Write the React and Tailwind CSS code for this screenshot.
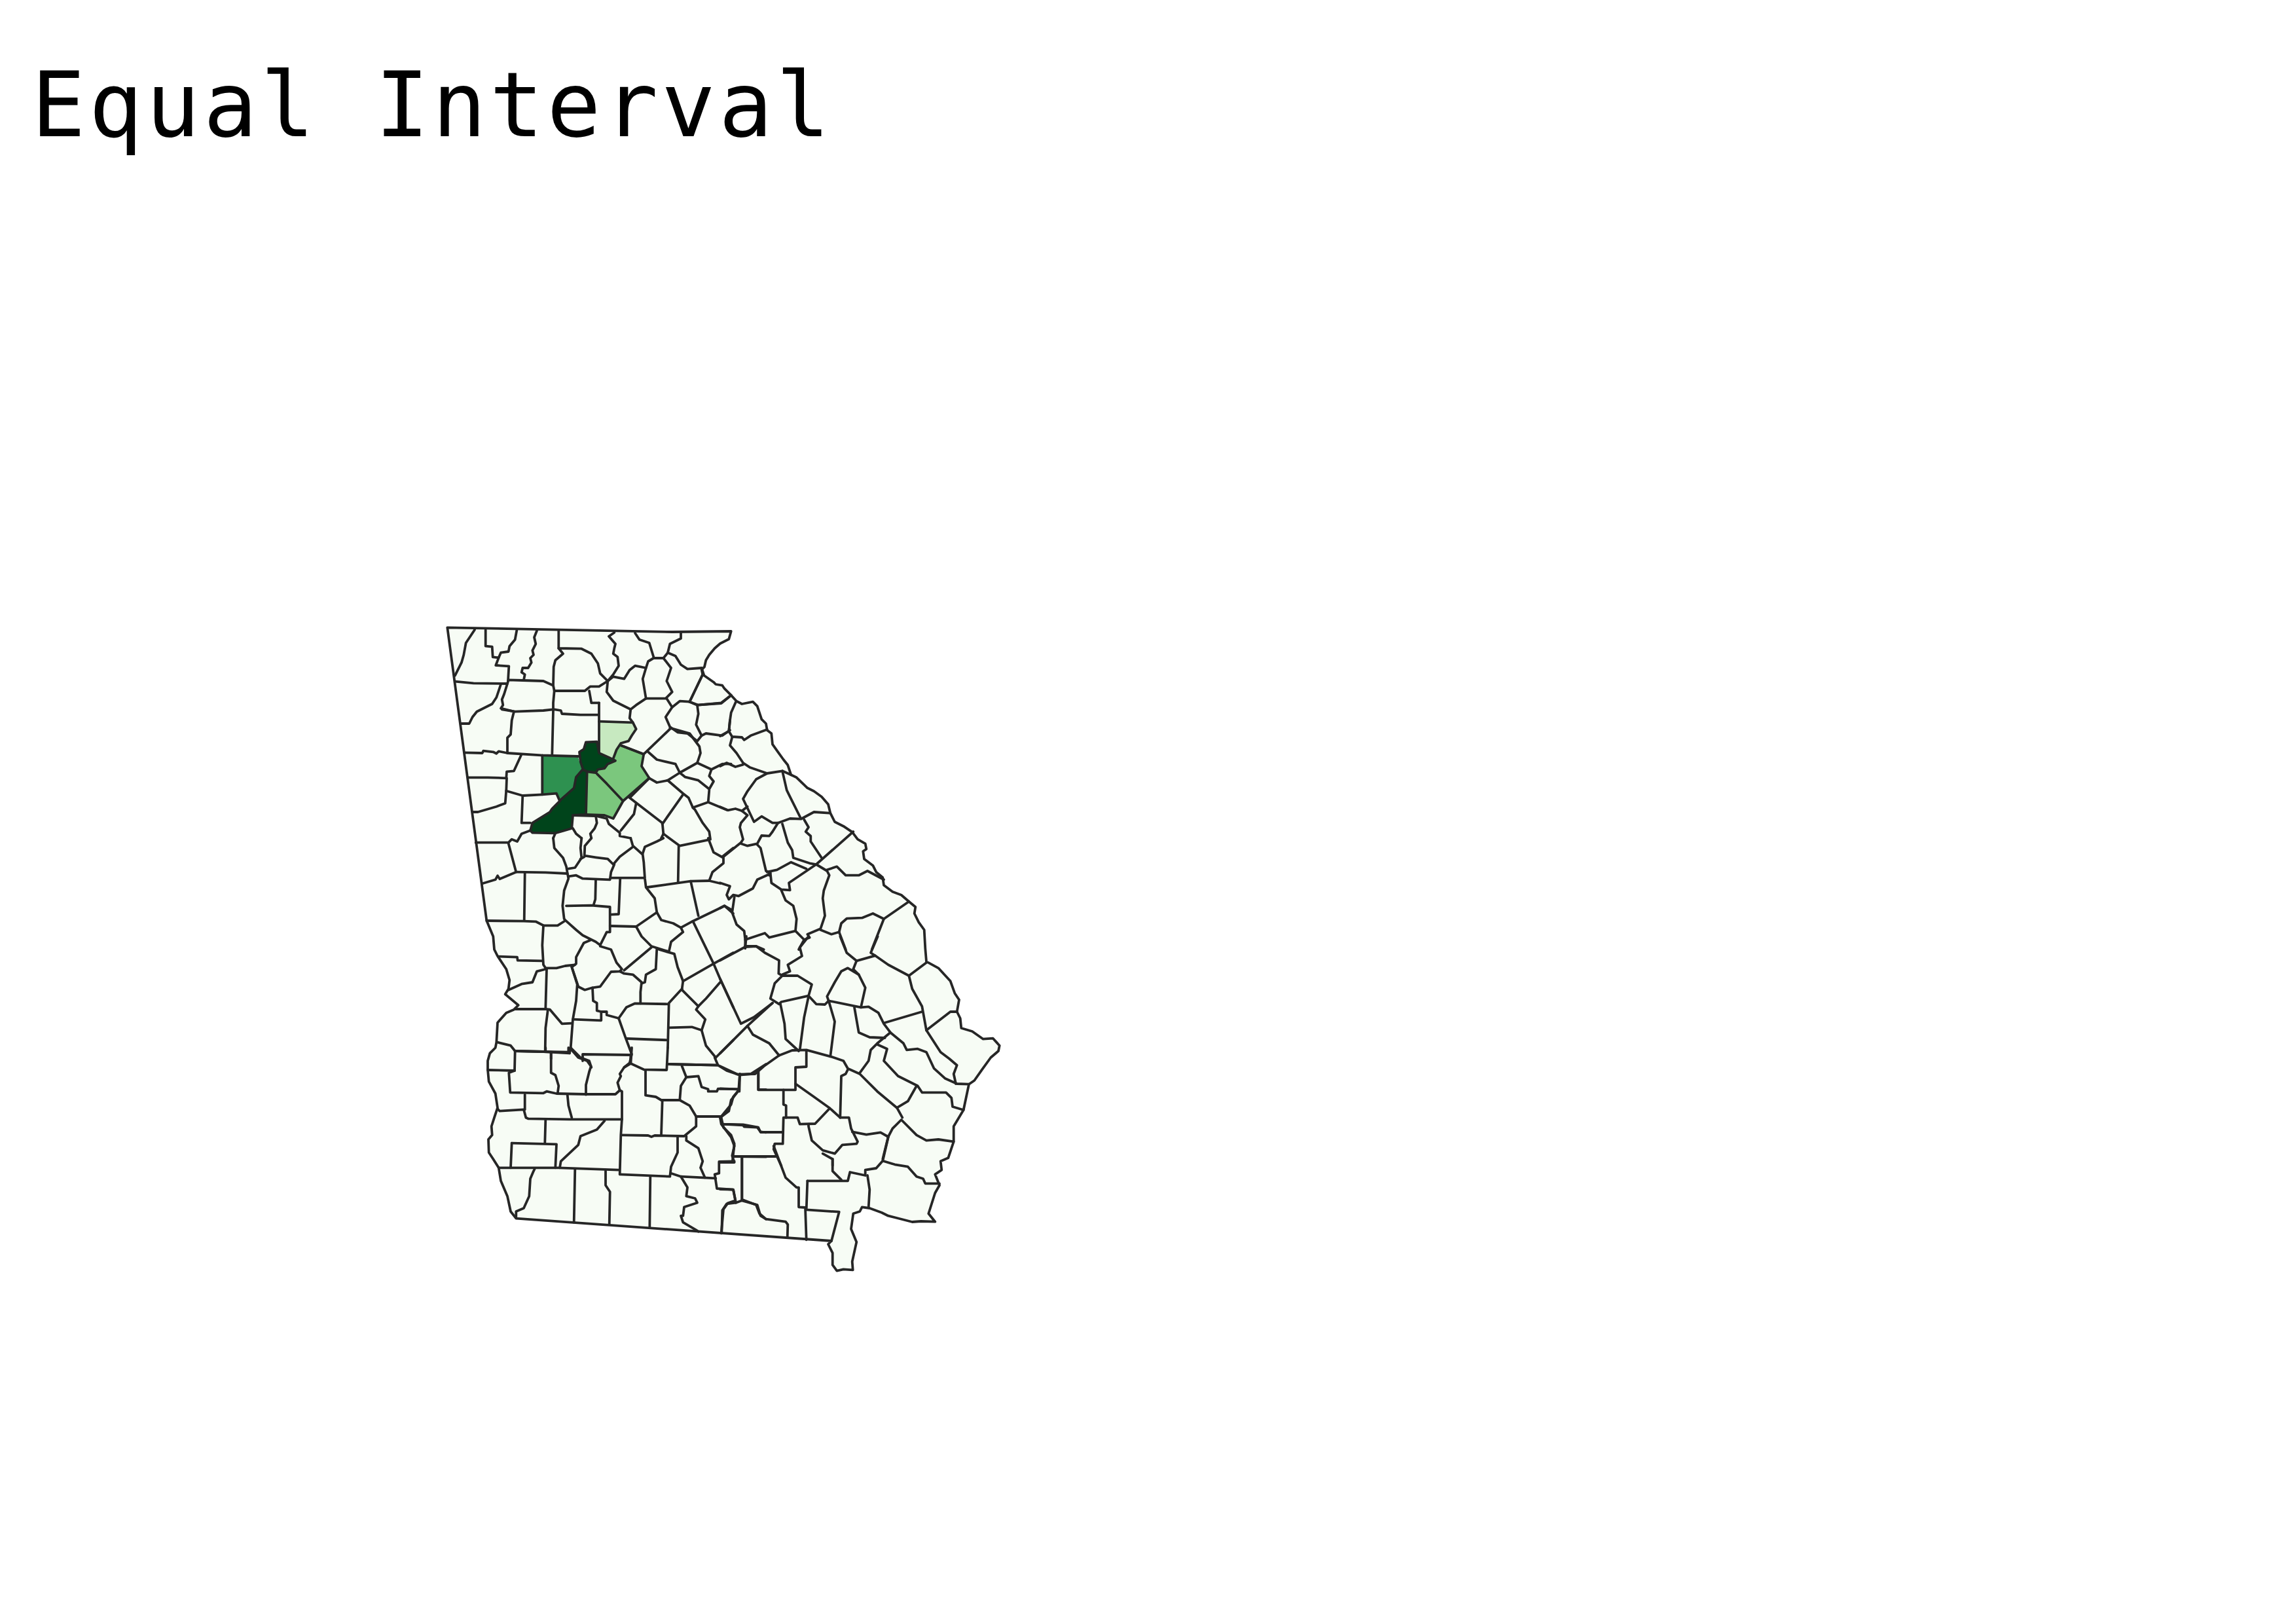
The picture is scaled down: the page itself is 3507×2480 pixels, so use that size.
const crops = {
  A: [670, 940], B: [670, 1280], C: [1100, 1100], D: [1100, 1430], E: [720, 1600], F: [1100, 1700], H: [1050, 1000],
};

const outlineSegs = [
  ["A", "40 55 1070 75 1340 72 1330 108 1290 128 1265 150 1240 180 1225 205 1218 235 1205 248"],
  ["H", "70 90 120 125 130 135 160 140 170 155 200 185 225 212 250 225 300 215 320 235 340 295 360 315 365 345"],
  ["C", "235 60 240 110 265 145 290 180 310 205 325 250 350 262 400 310 430 325 465 350 495 385 505 425 525 465 565 485 605 512 630 545 665 565 670 590 655 600 660 635 700 665 715 695 745 720 750 755 790 785 830 800 865 830 895 855 890 885 910 925 935 960 940 1045"],
  ["D", "945 115 1000 145 1055 205 1075 260 1095 290 1085 345 1100 375 1105 420 1155 435 1205 470 1250 467 1280 500 1275 525 1240 555 1200 610 1165 660 1140 677 1115 795 1070 870"],
  ["F", "1070 130 1045 205 1010 220 1015 260 985 280 1005 330 985 365 955 460 985 497 920 495 880 498 810 480 770 470 740 455 685 435 650 430 640 450 610 460 600 530 625 590 605 680 608 718 565 715 535 722 515 695 515 640 495 600 510 585"],
  ["E", "205 782 180 750 165 680 135 610 125 550 100 510 80 480 78 420 95 400 92 360 105 320 120 275 110 210 80 155 75 100 75 60 85 25 110 0"],
  ["B", "265 935 270 845 310 800 345 785 365 765 305 715 320 690 325 650 310 600 270 540 255 510 250 450 225 390 220 378"],
];

const fills = [
  ["#c7e9c0", "735 485 890 490 905 520 885 550 870 575 835 585 815 615 800 655 735 625"],
  ["#2e9150", "475 640 640 650 645 670 660 700 630 740 620 790 555 848 540 815 475 820"],
  ["#7bc77d", "835 595 940 635 930 690 965 745 845 850 770 770 725 725 730 705 760 700 775 680 810 665 800 655 815 615"],
  ["#7bc77d", "680 715 720 725 845 850 800 930 760 915 675 912"],
  ["#00441b", "555 850 520 885 510 900 430 950 420 985 430 995 535 997 610 975 615 915 675 912 680 715 720 720 730 705 760 700 775 680 810 665 780 650 735 630 725 578 675 580 665 612 645 625 650 670 660 700 630 740 620 790"],
];

const lines = {
  A: [
    "165 65 125 125 115 180 105 215 90 245 75 275",
    "215 65 215 140 245 143 248 190 275 193 285 170 320 165 325 140 350 110 358 68",
    "275 193 262 228 322 232 318 300",
    "75 302 160 310 315 312 320 295 385 297 480 300 525 320",
    "450 70 438 100 445 130 430 160 435 180 420 195 425 215 410 240 385 240 380 260 395 270 390 295",
    "550 70 550 150 655 152 700 175 730 220 740 265 775 300",
    "550 150 570 175 535 205 527 235 525 320 530 345 525 400 525 435 520 640",
    "530 345 670 345 695 325 735 325 775 300 800 270 825 230 820 190 800 175 805 150 810 130 780 95 805 78",
    "775 300 770 350 800 390 880 430 905 410 950 380 1040 380 1070 350 1045 300 1065 240 1030 195 985 195 960 210 950 240 900 230 875 250 850 290 800 280 775 300",
    "950 240 935 290 950 380",
    "900 80 920 110 965 125 985 190",
    "1110 75 1110 105 1060 130 1050 170 1030 195",
    "1050 170 1085 185 1110 225 1140 245 1205 240 1215 270",
    "1045 380 1070 420 1105 392 1150 395 1190 410 1295 400 1340 365",
    "1210 270 1150 395",
    "1070 420 1040 465 1060 510 1095 535 1140 540 1185 575 1205 550 1180 500 1190 450 1185 410",
    "1205 550 1225 540 1300 550 1335 525",
    "1362 395 1340 445 1335 480 1330 530",
    "1065 515 940 635 835 595",
    "735 485 890 490 905 520 885 550 870 575 835 585 815 615 800 655",
    "735 400 735 625",
    "690 345 700 400 735 400",
    "880 430 875 470 890 490",
    "530 430 560 435 565 450 650 455 730 455",
    "290 430 350 440 480 435 525 430",
    "315 312 300 360 290 385 295 410 285 425 345 440 335 480 330 545 315 560 315 630",
    "285 315 265 375 245 405 175 440 155 465 140 495 105 495",
    "120 628 200 630 205 620 250 625 265 632 275 622 315 630 470 640 640 645",
    "378 640 345 712 312 715 310 745",
    "135 742 225 742 312 745 310 800 305 860 265 875 180 900 157 900",
    "310 803 385 825 475 820 540 815 555 850",
    "475 640 475 820",
    "555 850 520 885 510 900 430 950 420 985 430 995 535 997 610 975 615 915 675 912 680 715 660 705 630 740 620 790 555 848",
    "660 700 650 670 645 625 665 612 675 580 725 578 735 630 780 650 810 665 775 680 760 700 730 705 720 720 680 715",
    "835 595 940 635 930 690 965 745 845 850 770 770 725 725",
    "845 850 800 930 760 915 675 912",
    "965 745 875 835 1025 950 1030 1000 1020 1020",
    "905 860 895 910 835 985",
    "385 825 380 950 420 950",
    "615 915 720 918 725 950 715 975 695 1000 700 1020",
    "730 920 770 930 780 955 830 995 830 1010 880 1020",
    "615 975 630 1000 655 1020",
    "535 997 525 1020",
    "420 985 380 1000 360 1035 335 1025 320 1040 170 1040",
    "960 625 1000 660 1085 680 1105 720 1050 755 1000 765 965 745",
    "1060 515 1150 540 1195 600 1200 630 1185 675 1250 705 1300 680 1340 680",
    "1105 720 1185 675",
    "1105 720 1130 740 1190 755 1240 795 1260 760 1240 735 1250 705",
    "1050 755 1120 815 1145 835 1165 880 1235 855 1240 800",
    "1235 855 1320 890",
    "1120 820 1025 955",
    "1165 880 1175 890 1210 950 1240 990 1245 1025",
  ],
  B: [
    "320 25 355 155 280 187 270 172 260 190 200 208",
    "355 155 490 157 590 162",
    "395 160 392 378",
    "220 378 390 380 445 382 480 400 545 400 580 378",
    "525 0 530 45 570 90 585 130 590 160 595 185 575 240 568 310 575 370 585 380 630 420 660 445 720 475 740 490",
    "655 0 650 45 655 90 625 135 595 140",
    "700 0 670 35 668 80 720 88 775 95 800 120 830 85 890 40",
    "668 85 650 95",
    "880 0 890 35 935 75 940 110 945 185 950 225 990 275 1000 340",
    "595 175 630 170 660 185 730 188 785 190 790 155 805 120",
    "790 182 940 182",
    "720 190 718 280 710 305",
    "585 310 700 308 785 315 785 430 770 430 740 490",
    "832 183 825 348 790 350",
    "785 402 905 405 1000 340",
    "905 405 930 450 975 495 1055 520",
    "1010 510 1080 530 1095 590 1120 655 1115 690",
    "1000 340 1020 375 1075 390 1110 410 1120 430 1065 475 1055 520",
    "975 500 850 605",
    "1000 505 995 600 950 625 945 660 930 665",
    "740 495 790 510 815 570 840 600 830 610 790 612 740 680 705 685 670 695 640 680 610 590 630 575 630 545 665 480 695 467",
    "480 400 475 490 480 580 490 595",
    "275 542 360 545 362 560 475 562",
    "490 595 540 595 580 585 625 580",
    "490 600 450 610 430 660 380 668 320 695",
    "495 600 490 780",
    "610 590 635 670 630 745 615 830 605 960 600 985",
    "350 783 490 783 510 785 565 850 610 848",
    "500 790 490 870 488 975",
    "270 935 330 950 350 975 480 978 600 985",
    "515 985 515 1010",
    "605 960 650 1005 690 1020 700 1050",
    "825 825 855 910 885 990 875 1030 850 1050",
    "615 830 745 835 745 795 770 795 770 810 825 825",
    "705 685 708 745 725 755 725 790 745 795",
    "825 825 860 775 900 757 1050 760",
    "925 757 925 705 930 660 890 625 850 620 830 610",
    "1115 690 1055 755 1050 960",
    "860 918 1050 925",
    "1115 695 1190 770 1225 735 1290 660",
    "1190 770 1180 785 1222 830 1205 880 1225 950 1270 1005",
    "1055 868 1160 865 1205 880",
    "1270 1005 1350 925",
    "1050 1035 1275 1040",
    "1120 655 1260 575 1350 525",
    "1165 380 1260 575 1290 645 1350 775",
    "1110 410 1165 380 1280 325 1310 310 1350 345",
    "955 225 1155 197 1190 355",
    "1155 197 1240 195 1290 207",
    "1100 35 1097 200",
    "1235 0 1260 65 1305 90 1305 115 1255 155 1240 195",
    "1300 85 1350 45",
    "1030 -20 1105 35 1235 8",
    "935 70 945 40 1000 15 1030 0",
  ],
  C: [
    "45 0 40 50 0 72",
    "40 50 55 75 100 78 110 90 140 70 215 42",
    "55 78 45 115 75 150 105 195 135 215 215 243 285 232 325 250",
    "0 210 30 195 70 213 105 203",
    "215 243 165 270 125 325 105 360 155 465 190 440 240 470 265 470 320 450 370 452 430 420 500 425",
    "285 232 305 320 315 340 370 450",
    "125 395 100 415",
    "0 397 35 412 70 405 100 415 125 435 95 470 90 490 105 545 95 560 15 625",
    "265 470 240 510 225 530 190 528 170 565 125 575 95 565",
    "285 475 310 560 330 595 335 630 410 655 440 660 610 510",
    "385 455 405 490 392 510 415 530 415 555 465 630",
    "170 570 185 585 210 690 230 700 225 710",
    "215 695 260 685 325 650 395 680",
    "440 660 315 745 320 778 280 775 235 745 230 700",
    "225 705 170 730 150 770 85 805 60 800 40 820 30 800 45 760 0 745",
    "280 778 300 825 335 850 350 910 345 965 225 995 205 975 115 1005 115 1045",
    "115 1035 165 1035 200 1050",
    "65 810 55 880 75 935 110 965 115 1005",
    "55 870 20 850 0 860",
    "345 965 385 1005 360 1050",
    "440 660 490 690 500 710 475 780 470 815 480 895 460 955 400 980 410 995 385 1005",
    "490 685 535 670 575 710 635 710 675 690 750 730",
    "460 960 510 980 545 970 575 1050",
    "545 970 555 930 580 908 650 905 700 885 750 910 865 830",
    "750 910 695 1050",
  ],
  D: [
    "550 0 580 75 625 112 710 88 690 75 722 0",
    "625 112 610 150",
    "0 110 115 48 165 45 205 75 270 110 268 170 285 180 355 180 420 220 405 272",
    "115 48 120 0",
    "405 0 365 50 375 90 310 130 320 160 285 175",
    "285 180 250 215 230 285 270 310 280 300 405 272 440 310 480 312 497 295",
    "0 195 95 400 155 370 240 305",
    "240 305 125 410 0 535",
    "125 410 150 450 225 490 270 545",
    "275 305 295 400 300 470 360 525",
    "405 275 385 370 365 520",
    "497 295 525 390 505 550",
    "0 595 80 632 160 630 200 595 270 545 330 522 395 520 505 550 565 570 585 605 640 630 720 710 810 785 835 830",
    "497 295 490 275 525 210 555 160 585 145 635 175 665 235 645 325",
    "497 295 645 325 680 322 725 350 750 400 780 440 840 490 855 520 905 515 945 530 980 605 1030 650 1085 675 1140 677",
    "610 150 635 175",
    "710 88 770 130 865 180 880 240 925 320 945 430 1010 530 1050 560 1085 590 1070 630 1080 675",
    "865 180 945 120",
    "750 397 925 345",
    "945 430 1055 345 1085 345",
    "615 325 635 440 685 462 755 465",
    "780 440 720 490 690 520 680 570 640 625",
    "720 495 765 515 750 570 815 640 905 685 925 715 1035 715 1060 740 1065 780 1115 795",
    "900 685 860 755 810 785",
    "175 620 175 703 345 703 345 600 395 597 395 525",
    "345 675 430 735 500 785 550 830 555 640 575 630 585 610",
    "290 703 290 770 302 775 302 830 355 830 365 860 435 858 500 790",
    "405 860 405 870 420 935 470 980 525 995 560 955 625 950 630 940 600 880 590 830 550 830",
    "605 895 670 908 735 898 770 918 790 880 830 840 900 910 945 935 1000 930 1070 940",
    "770 918 745 1020",
    "90 630 85 700 0 697",
    "85 705 50 750 40 800 0 830 10 860 105 862 175 875 185 897 287 897",
    "302 830 290 830 287 950 250 950 245 975 280 1050",
    "0 830 5 860 50 920 65 960 55 1005 65 1035 0 1035",
    "60 1008 255 1008",
    "470 995 515 1020 515 1050",
  ],
  F: [
    "100 205 100 395 165 420 180 460 210 485 300 497 310 510 308 570",
    "245 150 300 295 350 340 360 340 360 430 390 432 395 580",
    "400 310 585 310 595 270 665 285 665 260 715 252 745 218 770 110",
    "400 310 395 442 545 452 510 585",
    "515 210 515 265 555 305",
    "675 285 685 350 680 430",
    "745 218 800 235 860 245 900 290 930 300 940 322 1005 322",
    "0 348 60 350 70 400 35 412 15 440 5 550",
  ],
  E: [
    "200 15 330 18 445 20 455 5 490 45 530 60 548 85 540 110 525 170 525 215",
    "200 15 198 105 75 102",
    "340 0 340 18",
    "445 0 445 20",
    "365 25 365 115 385 125 400 175 395 210",
    "198 105 172 115 178 205 330 208 345 200 390 210 525 213 660 213 680 195 690 200 690 325 685 400 680 580",
    "510 60 510 30 730 33 730 72 700 90 680 120 685 130 670 160 680 195",
    "735 0 730 72 790 100 895 102 900 0",
    "900 75 1130 80 1115 45",
    "798 105 798 218 845 225 870 240 955 240 960 175 985 135 965 85",
    "985 135 1040 130 1055 180 1085 190 1085 200 1125 200 1130 188 1228 190",
    "955 240 1000 265 1030 315 1145 315 1190 260 1200 225 1225 195",
    "875 240 870 400",
    "690 400 810 402 825 408 840 402 975 405 1030 360 1030 315",
    "1130 80 1170 105 1230 125 1280 120 1350 75",
    "1230 125 1228 200",
    "1315 105 1315 192 1350 192",
    "1145 320 1155 365 1190 400 1205 440 1197 515",
    "1150 350 1245 355 1250 362 1310 365 1325 385 1350 388",
    "1205 498 1350 500",
    "1240 500 1240 700 1310 720 1325 770 1350 785",
    "1205 520 1135 522 1135 575 1115 580 1125 645 1200 650 1212 710 1240 700",
    "1212 710 1170 715 1150 745 1147 850",
    "680 580 910 590 915 545 945 480 945 410",
    "985 405 985 425 1040 460 1060 520 1050 550 1070 595",
    "915 575 960 590 1120 598",
    "960 590 990 640 985 680 1025 690 1035 710 975 730 970 770 960 770 970 800 1030 835 1040 842",
    "820 590 817 825",
    "125 550 400 550 675 560",
    "290 555 285 565 270 600 265 680 240 735 205 750 205 780",
    "475 555 470 800",
    "615 565 615 630 635 660 632 810",
    "120 280 130 290 240 283 250 320 260 325 450 328 690 328",
    "245 215 245 283",
    "440 215 445 265 460 320",
    "340 330 337 435",
    "185 437 390 442 385 550",
    "185 437 180 550",
    "610 335 575 375 500 405 490 445 410 520 405 550",
  ],
  H: [
    "70 90 10 215",
    "10 215 45 230 155 222 200 185",
  ],
};

function toFull(key, str) {
  const [ox, oy] = crops[key];
  const n = str.trim().split(/\s+/).map(Number);
  const out = [];
  for (let i = 0; i < n.length; i += 2) {
    out.push(`${(ox + n[i] / 3).toFixed(1)},${(oy + n[i + 1] / 3).toFixed(1)}`);
  }
  return out.join(" ");
}

function GeorgiaMap() {
  const outline = outlineSegs.map(([k, s]) => toFull(k, s)).join(" ");
  return (
    <svg viewBox="660 930 900 1040" className="block w-[900px] h-[1040px] ml-[660px] mt-[690px]">
      <polygon points={outline} fill="#f7fcf5" stroke="#262626" strokeWidth="3.8" strokeLinejoin="round" />
      {fills.map(([c, s], i) => (
        <polygon key={i} points={toFull("A", s)} fill={c} />
      ))}
      <g fill="none" stroke="#262626" strokeWidth="3.8" strokeLinejoin="round" strokeLinecap="round">
        {Object.entries(lines).flatMap(([k, arr]) =>
          arr.map((s, i) => <polyline key={k + i} points={toFull(k, s)} />)
        )}
      </g>
    </svg>
  );
}

export default function App() {
  return (
    <div className="w-[3507px] h-[2480px] bg-white overflow-hidden">
      <h1 className="h-[240px] pl-[48px] pt-[92px] text-[137px] tracking-[5px] leading-none font-normal text-black font-['DejaVu_Sans_Mono',monospace] whitespace-pre">
        Equal Interval
      </h1>
      <GeorgiaMap />
    </div>
  );
}
